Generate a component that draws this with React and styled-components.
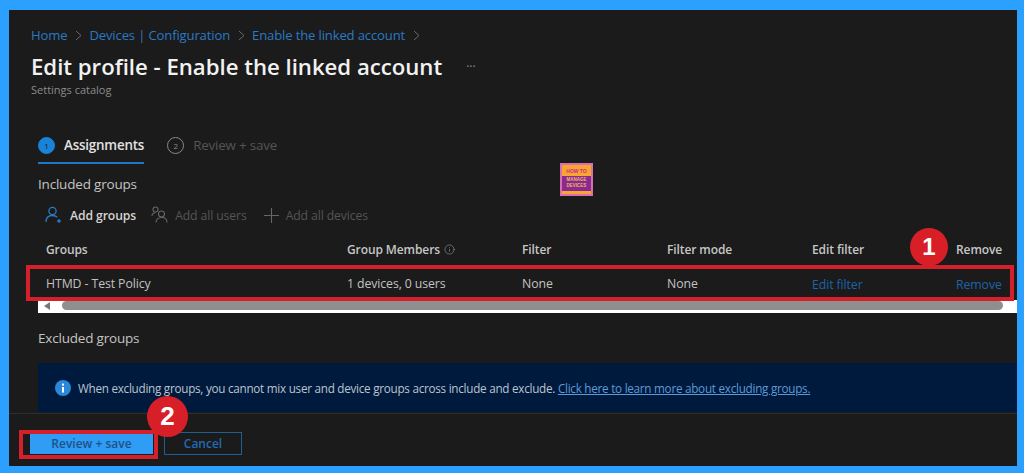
import React from 'react'
import styled, { createGlobalStyle } from 'styled-components'
import { Info } from 'lucide-react'

const Global = createGlobalStyle`
  html, body { margin: 0; padding: 0; }
  body { width: 1024px; height: 473px; overflow: hidden; font-family: "Open Sans", "Noto Sans", "Liberation Sans", sans-serif; }
`

const Frame = styled.div`
  box-sizing: border-box;
  width: 1024px;
  height: 473px;
  background: #2ba0ff;
  padding: 10px 7px 7px 9px;
`
const Panel = styled.div`
  position: relative;
  height: 100%;
  background: #1b1b1b;
  display: flex;
  flex-direction: column;
`
const Main = styled.div`
  flex: 1;
  padding-top: 16px;
  display: flex;
  flex-direction: column;
`
const Crumbs = styled.nav`
  display: flex;
  align-items: center;
  gap: 7.5px;
  padding-left: 22px;
  height: 18px;
  font-size: 13.1px;
  letter-spacing: -0.15px;
  color: #2a79c4;
`
const Sep = styled.svg`
  width: 7px;
  height: 11px;
  fill: none;
  stroke: #6a6a6a;
  stroke-width: 1;
`
const TitleRow = styled.div`
  display: flex;
  align-items: center;
  padding: 7px 0 0 22px;
  height: 31px;
`
const Title = styled.h1`
  margin: 0;
  font-size: 22.2px;
  line-height: 31px;
  font-weight: 600;
  letter-spacing: -0.02px;
  color: #f2f2f2;
  white-space: nowrap;
`
const More = styled.span`
  margin: 0 0 0 24px;
  color: #8a8a8a;
  font-size: 12px;
  line-height: 14px;
`
const Sub = styled.div`
  padding: 1px 0 0 22px;
  height: 16px;
  font-size: 11px;
  line-height: 14px;
  color: #8c8c8c;
`
const Tabs = styled.div`
  display: flex;
  gap: 23px;
  margin: 29px 0 0 29px;
  height: 36px;
`
const Tab = styled.div`
  display: flex;
  align-items: center;
  gap: 9px;
  height: 34px;
  font-size: 13.4px;
  letter-spacing: -0.2px;
  font-weight: ${(p) => (p.$active ? 600 : 400)};
  color: ${(p) => (p.$active ? '#e2e2e2' : '#555')};
  border-bottom: 2px solid ${(p) => (p.$active ? '#1f78c1' : 'transparent')};
`
const Step = styled.span`
  box-sizing: border-box;
  width: 17px;
  height: 17px;
  border-radius: 50%;
  display: flex;
  align-items: center;
  justify-content: center;
  font-size: 8px;
  font-weight: 400;
  color: ${(p) => (p.$active ? '#1b1b1b' : '#8a8a8a')};
  background: ${(p) => (p.$active ? '#1883d8' : 'transparent')};
  border: 1px solid ${(p) => (p.$active ? '#1883d8' : '#8a8a8a')};
`
const SectionLabel = styled.div`
  margin-left: 29px;
  font-size: 13.5px;
  letter-spacing: -0.2px;
  color: #c4c4c4;
`
const Included = styled(SectionLabel)`
  margin-top: 11px;
`
const Toolbar = styled.div`
  display: flex;
  align-items: center;
  margin: 12px 0 0 36px;
  height: 20px;
`
const ToolButton = styled.div`
  display: flex;
  align-items: center;
  gap: 7px;
  margin-right: ${(p) => p.$gap}px;
  font-size: 12.2px;
  letter-spacing: -0.1px;
  font-weight: ${(p) => (p.$on ? 600 : 400)};
  color: ${(p) => (p.$on ? '#d4d4d4' : '#555')};
  svg { display: block; }
`
const Table = styled.div`
  position: relative;
  margin-top: 8px;
  margin-left: 29px;
`
const Row = styled.div`
  display: grid;
  grid-template-columns: 301px 175px 145px 145px 1fr 46px;
  align-items: center;
  box-sizing: border-box;
  height: ${(p) => p.$h}px;
  padding: 0 15px 0 8px;
  font-size: ${(p) => (p.$head ? 12 : 12.3)}px;
  letter-spacing: -0.1px;
  font-weight: ${(p) => (p.$head ? 600 : 400)};
  color: ${(p) => (p.$head ? '#c6c6c6' : '#c2c2c2')};
  white-space: nowrap;
`
const HeadCell = styled.span`
  display: flex;
  align-items: center;
  gap: 4px;
`
const LinkCell = styled.span`
  color: #1c63ac;
  padding-top: 2px;
  font-size: 12.3px;
`
const Scrollbar = styled.div`
  height: 13px;
  background: #fff;
  display: flex;
  align-items: center;
  padding: 0 14px 2px 6px;
  box-sizing: border-box;
`
const Arrow = styled.span`
  width: 0;
  height: 0;
  border-style: solid;
  border-width: 4px 6px 4px 0;
  border-color: transparent #777 transparent transparent;
  margin-right: 12px;
`
const Thumb = styled.div`
  flex: 1;
  height: 9px;
  background: #8f8f8f;
  border-radius: 5px;
`
const RowMark = styled.div`
  position: absolute;
  box-sizing: border-box;
  left: -12px;
  right: 3px;
  top: 32px;
  height: 36px;
  border: 4px solid #d3202b;
  pointer-events: none;
`
const Excluded = styled(SectionLabel)`
  margin-top: 16px;
`
const Notice = styled.div`
  display: flex;
  align-items: center;
  gap: 7px;
  margin: 16px 0 0 29px;
  padding-left: 17px;
  height: 49px;
  background: #001a3e;
  font-size: 11.7px;
  letter-spacing: -0.26px;
  color: #bcc4ce;
  white-space: nowrap;
`
const NoticeLink = styled.a`
  color: #5c9ad8;
  text-decoration: underline;
`
const Footer = styled.div`
  position: relative;
  display: flex;
  align-items: center;
  gap: 11px;
  height: 53px;
  box-sizing: border-box;
  border-top: 1px solid #2e2e2e;
  padding: 7px 0 0 21px;
`
const Primary = styled.button`
  width: 123px;
  height: 20px;
  border: 0;
  padding: 0;
  background: #2f9cf5;
  color: #1d5288;
  font: 600 12px "Open Sans", sans-serif;
`
const Secondary = styled.button`
  box-sizing: border-box;
  width: 78px;
  height: 23px;
  padding: 0;
  background: transparent;
  border: 1px solid #1f5f95;
  color: #1f6cb5;
  font: 600 12px "Open Sans", sans-serif;
`
const ButtonMark = styled.div`
  position: absolute;
  box-sizing: border-box;
  left: 10px;
  top: 16px;
  width: 139px;
  height: 29px;
  border: 4px solid #d3202b;
`
const Badge = styled.div`
  position: absolute;
  left: ${(p) => p.$x}px;
  top: ${(p) => p.$y}px;
  width: ${(p) => p.$d}px;
  height: ${(p) => p.$d}px;
  border-radius: 50%;
  background: #d81f28;
  color: #fff;
  display: flex;
  align-items: center;
  justify-content: center;
  font: 700 ${(p) => p.$size}px "Liberation Sans", sans-serif;
`
const Logo = styled.div`
  position: absolute;
  left: 551px;
  top: 153px;
  box-sizing: border-box;
  width: 33px;
  height: 33px;
  border: 2px solid #d870b0;
  background: #f7a630;
  display: flex;
  flex-direction: column;
  align-items: center;
  font: 700 5px "Liberation Sans", sans-serif;
  line-height: 6px;
  color: #d81f9a;
  padding-top: 3px;
`
const LogoBand = styled.div`
  margin-top: 2px;
  width: 100%;
  height: 14px;
  background: #8a2a90;
  color: #f0b860;
  text-align: center;
  font-size: 4.5px;
  line-height: 6px;
  padding-top: 1px;
  overflow: hidden;
`

const Chevron = () => (
  <Sep viewBox="0 0 7 11">
    <path d="M1 1l5 4.5L1 10" />
  </Sep>
)

const AddUser = () => (
  <svg width="18" height="18" viewBox="0 0 18 18" fill="none" stroke="#2a79c4" strokeWidth="1.3">
    <circle cx="7.5" cy="5" r="3.6" />
    <path d="M1 16c0-4 2.5-6.5 6.5-6.5 2 0 3.6.6 4.7 1.8" />
    <path d="M14 13v4M12 15h4" />
  </svg>
)

const Users = () => (
  <svg width="17" height="18" viewBox="0 0 17 18" fill="none" stroke="#666" strokeWidth="1.1">
    <circle cx="4.5" cy="3.5" r="2.5" />
    <path d="M1 10c0-2 1.4-3.2 3.5-3.2" />
    <circle cx="10.5" cy="8" r="3" />
    <path d="M5 16.5c0-3 2.2-5 5.5-5s5.5 2 5.5 5" />
  </svg>
)

const Plus = () => (
  <svg width="15" height="15" viewBox="0 0 15 15" fill="none" stroke="#666" strokeWidth="1.1">
    <path d="M7.5 0v15M0 7.5h15" />
  </svg>
)

function App() {
  return (
    <Frame>
      <Global />
      <Panel>
        <Main>
          <Crumbs>
            <span>Home</span>
            <Chevron />
            <span>Devices | Configuration</span>
            <Chevron />
            <span>Enable the linked account</span>
            <Chevron />
          </Crumbs>
          <TitleRow>
            <Title>Edit profile - Enable the linked account</Title>
            <More>···</More>
          </TitleRow>
          <Sub>Settings catalog</Sub>
          <Tabs>
            <Tab $active>
              <Step $active>1</Step>
              Assignments
            </Tab>
            <Tab>
              <Step>2</Step>
              Review + save
            </Tab>
          </Tabs>
          <Included>Included groups</Included>
          <Toolbar>
            <ToolButton $on $gap={15}>
              <AddUser />
              Add groups
            </ToolButton>
            <ToolButton $gap={17}>
              <Users />
              Add all users
            </ToolButton>
            <ToolButton $gap={0}>
              <Plus />
              Add all devices
            </ToolButton>
          </Toolbar>
          <Table>
            <Row $head $h={33}>
              <HeadCell>Groups</HeadCell>
              <HeadCell>
                Group Members
                <Info size={11} strokeWidth={1.5} color="#8a8a8a" />
              </HeadCell>
              <HeadCell>Filter</HeadCell>
              <HeadCell>Filter mode</HeadCell>
              <HeadCell>Edit filter</HeadCell>
              <HeadCell>Remove</HeadCell>
            </Row>
            <Row $h={34}>
              <span>HTMD - Test Policy</span>
              <span>1 devices, 0 users</span>
              <span>None</span>
              <span>None</span>
              <LinkCell>Edit filter</LinkCell>
              <LinkCell>Remove</LinkCell>
            </Row>
            <Scrollbar>
              <Arrow />
              <Thumb />
            </Scrollbar>
            <RowMark />
          </Table>
          <Excluded>Excluded groups</Excluded>
          <Notice>
            <svg width="16" height="16" viewBox="0 0 16 16">
              <circle cx="8" cy="8" r="8" fill="#2b88d8" />
              <rect x="7" y="7" width="2" height="5.5" fill="#fff" />
              <rect x="7" y="3.6" width="2" height="2" fill="#fff" />
            </svg>
            <span>
              When excluding groups, you cannot mix user and device groups across include and exclude.{' '}
              <NoticeLink>Click here to learn more about excluding groups.</NoticeLink>
            </span>
          </Notice>
        </Main>
        <Footer>
          <Primary>Review + save</Primary>
          <Secondary>Cancel</Secondary>
          <ButtonMark />
        </Footer>
        <Logo>
          HOW TO
          <LogoBand>
            MANAGE
            <br />
            DEVICES
          </LogoBand>
        </Logo>
        <Badge $x={901} $y={218} $d={38} $size={24}>1</Badge>
        <Badge $x={138} $y={386} $d={41} $size={26}>2</Badge>
      </Panel>
    </Frame>
  )
}

export default App
